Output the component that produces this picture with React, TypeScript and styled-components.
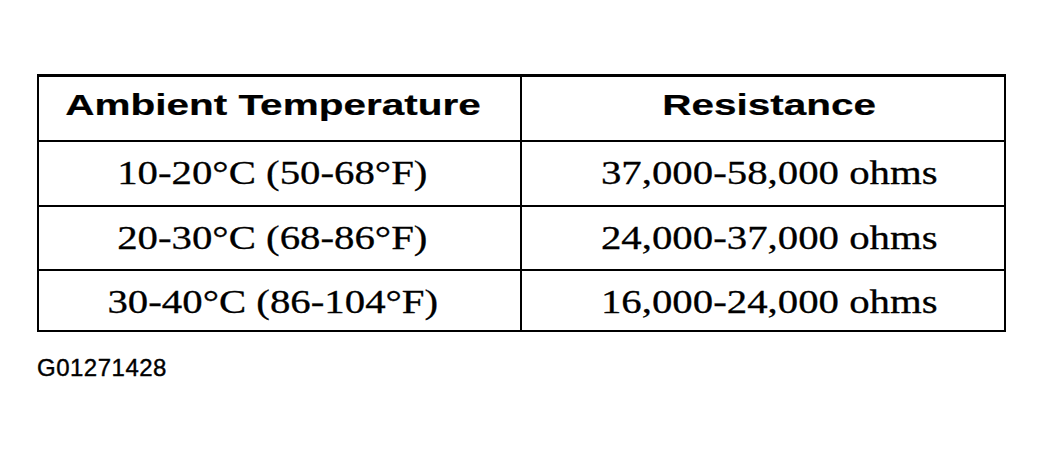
import React from "react";
import styled, { createGlobalStyle } from "styled-components";

const Global = createGlobalStyle`
  html, body {
    margin: 0;
    padding: 0;
    background: #ffffff;
  }
  body {
    width: 1044px;
    height: 452px;
    overflow: hidden;
    color: #000;
  }
`;

const Page = styled.div`
  display: flex;
  flex-direction: column;
  align-items: flex-start;
  padding: 74px 0 0 37px;
`;

const Table = styled.div`
  width: 969px;
  box-sizing: border-box;
  border: 2px solid #000;
  border-top-width: 3px;
  display: flex;
  flex-direction: column;
`;

const Row = styled.div<{ $height: number; $first?: boolean }>`
  display: grid;
  grid-template-columns: 481px 2px 1fr;
  height: ${(p) => p.$height}px;
  box-sizing: content-box;
  border-top: ${(p) => (p.$first ? "none" : "2px solid #000")};
`;

const Divider = styled.div`
  background: #000;
`;

const Cell = styled.div<{ $side: "left" | "right"; $top: number }>`
  display: flex;
  justify-content: center;
  align-items: flex-start;
  padding-top: ${(p) => p.$top}px;
  padding-left: ${(p) => (p.$side === "right" ? 12 : 0)}px;
  padding-right: ${(p) => (p.$side === "left" ? 14 : 0)}px;
  overflow: hidden;
`;

const HeadText = styled.span`
  display: inline-block;
  font-family: "Liberation Sans", Arial, sans-serif;
  font-weight: 700;
  font-size: 30px;
  line-height: 34px;
  white-space: nowrap;
  -webkit-text-stroke: 0.2px #000;
  transform: scaleX(1.35);
  transform-origin: center;
`;

const BodyText = styled.span`
  display: inline-block;
  font-family: "Liberation Serif", "Times New Roman", serif;
  font-weight: 400;
  font-size: 34px;
  line-height: 38px;
  white-space: nowrap;
  -webkit-text-stroke: 0.3px #000;
  transform: scaleX(1.2);
  transform-origin: center;
`;

const Caption = styled.div`
  margin-top: 22px;
  font-family: "Liberation Sans", Arial, sans-serif;
  font-size: 24px;
  line-height: 28px;
  letter-spacing: 0.5px;
  white-space: nowrap;
  -webkit-text-stroke: 0.4px #000;
`;

const rows = [
  { temp: "10-20°C (50-68°F)", res: "37,000-58,000 ohms", height: 63 },
  { temp: "20-30°C (68-86°F)", res: "24,000-37,000 ohms", height: 62 },
  { temp: "30-40°C (86-104°F)", res: "16,000-24,000 ohms", height: 59 },
];

export default function App() {
  return (
    <>
      <Global />
      <Page>
        <Table>
          <Row $height={63} $first>
            <Cell $side="left" $top={11}>
              <HeadText>Ambient Temperature</HeadText>
            </Cell>
            <Divider />
            <Cell $side="right" $top={11}>
              <HeadText>Resistance</HeadText>
            </Cell>
          </Row>
          {rows.map((r) => (
            <Row key={r.temp} $height={r.height}>
              <Cell $side="left" $top={12}>
                <BodyText>{r.temp}</BodyText>
              </Cell>
              <Divider />
              <Cell $side="right" $top={12}>
                <BodyText>{r.res}</BodyText>
              </Cell>
            </Row>
          ))}
        </Table>
        <Caption>G01271428</Caption>
      </Page>
    </>
  );
}
